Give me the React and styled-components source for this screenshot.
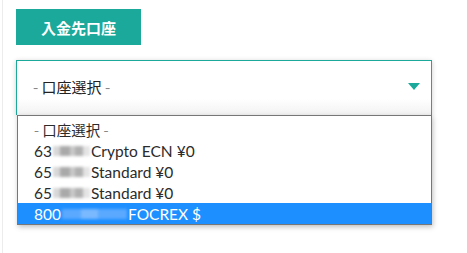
import React from 'react';
import styled, { createGlobalStyle } from 'styled-components';

const GlobalStyle = createGlobalStyle`
    html, body {
        margin: 0;
        padding: 0;
        background: #fff;
    }
    body {
        font-family: Lato, "Noto Sans CJK JP", sans-serif;
    }
`;

const teal = '#1aa99a';

const options = [
    { id: 'none', head: '', mask: 0, label: '口座選択', dashed: true },
    { id: 'a', head: '63', mask: 37, label: 'Crypto ECN ¥0' },
    { id: 'b', head: '65', mask: 37, label: 'Standard ¥0' },
    { id: 'c', head: '65', mask: 37, label: 'Standard ¥0' },
    { id: 'd', head: '800', mask: 65, label: 'FOCREX $', active: true },
];

const App = () => {
    return (
        <>
            <GlobalStyle />
            <Page>
                <TitleButton>入金先口座</TitleButton>
                <SelectWrap>
                    <SelectBox>
                        <Placeholder>
                            <Dash>- </Dash>口座選択<Dash> -</Dash>
                        </Placeholder>
                        <Caret viewBox="0 0 12 7">
                            <path d="M0 0 L12 0 L6 7 Z" fill={teal} />
                        </Caret>
                    </SelectBox>
                    <OptionList>
                        {options.map(o => (
                            <Option key={o.id} active={o.active}>
                                {o.dashed ? (
                                    <CjkText>
                                        <Dash>- </Dash>{o.label}<Dash> -</Dash>
                                    </CjkText>
                                ) : (
                                    <>
                                        {o.head}
                                        <Mask style={{ width: o.mask }} active={o.active} />
                                        {o.label}
                                    </>
                                )}
                            </Option>
                        ))}
                    </OptionList>
                </SelectWrap>
            </Page>
        </>
    );
};

const Page = styled.div`
    position: relative;
    height: 253px;
    margin-left: 2px;
    border-left: 1px solid #ececec;
    padding: 9px 0 0 13px;
    box-sizing: border-box;
`;

const TitleButton = styled.div`
    display: flex;
    align-items: center;
    justify-content: center;
    width: 125px;
    height: 36px;
    background: ${teal};
    color: #fff;
    font-family: "Noto Sans CJK JP", sans-serif;
    font-weight: 700;
    font-size: 15px;
`;

const SelectWrap = styled.div`
    position: relative;
    margin-top: 15px;
    width: 416px;
`;

const SelectBox = styled.div`
    display: flex;
    align-items: center;
    justify-content: space-between;
    height: 55px;
    box-sizing: border-box;
    border: 1px solid ${teal};
    border-bottom: none;
    padding: 0 11px 3px 16px;
    background: linear-gradient(to bottom, #fff 70%, #f2f2f2 100%);
    box-shadow: 0 1px 5px rgba(0, 0, 0, 0.2);
`;

const Placeholder = styled.span`
    font-family: "Noto Sans CJK JP", sans-serif;
    font-size: 15px;
    color: #222;
`;

const CjkText = styled.span`
    font-family: "Noto Sans CJK JP", sans-serif;
    font-size: 14.5px;
`;

const Dash = styled.span`
    color: #888;
`;

const Caret = styled.svg`
    width: 12px;
    height: 7px;
`;

const OptionList = styled.div`
    position: absolute;
    top: 55px;
    left: 1px;
    right: 0;
    border: 1px solid #777;
    background: #fff;
    box-shadow: 1px 2px 5px rgba(0, 0, 0, 0.25);
    padding-top: 3px;
`;

const Option = styled.div`
    display: flex;
    align-items: center;
    height: 21px;
    padding-left: 16px;
    font-size: 15.5px;
    color: ${p => (p.active ? '#fff' : '#2b2b2b')};
    background: ${p => (p.active ? '#1e8fff' : 'transparent')};
    white-space: pre;
`;

const Mask = styled.span`
    display: inline-block;
    height: 10px;
    margin: 0 1px;
    filter: blur(1.5px);
    background: ${p => (p.active
        ? 'linear-gradient(90deg, #5aa9ff 0 30%, #7bb9ff 30% 55%, #5aa9ff 55% 100%)'
        : 'linear-gradient(90deg, #d8d8d8 0 20%, #a9a9a9 20% 45%, #c9c9c9 45% 60%, #b0b0b0 60% 80%, #e4e4e4 80% 100%)')};
`;

export default App;
